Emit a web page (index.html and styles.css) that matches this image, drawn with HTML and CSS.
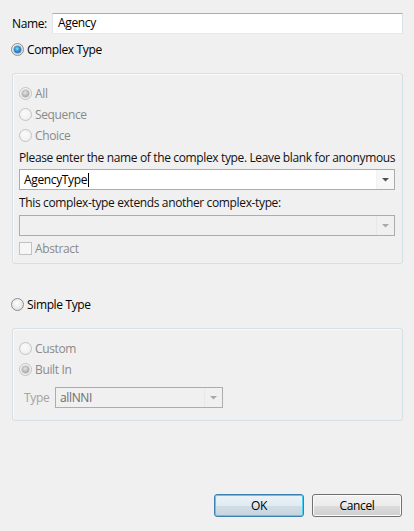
FILE: index.html
```html
<!DOCTYPE html>
<html>
<head>
<meta charset="utf-8">
<link rel="stylesheet" href="styles.css">
</head>
<body>
<div class="dialog">
  <div class="name-row">
    <span class="name-label">Name:</span>
    <div class="field name-field">Agency</div>
  </div>

  <div class="opt top-opt"><span class="radio checked"></span><span>Complex Type</span></div>

  <div class="group g1">
    <div class="opt dis"><span class="radio dis checked"></span><span>All</span></div>
    <div class="opt dis"><span class="radio dis"></span><span>Sequence</span></div>
    <div class="opt dis"><span class="radio dis"></span><span>Choice</span></div>
    <div class="caption cap1">Please enter the name of the complex type. Leave blank for anonymous</div>
    <div class="combo">
      <span class="val">AgencyType<span class="caret"></span></span>
      <span class="drop"><svg width="7" height="4" viewBox="0 0 7 4"><polygon points="0,0 7,0 3.5,3.5" fill="#505050"/></svg></span>
    </div>
    <div class="caption cap2">This complex-type extends another complex-type:</div>
    <div class="combo disabled">
      <span class="val"></span>
      <span class="drop"><svg width="7" height="4" viewBox="0 0 7 4"><polygon points="0,0 7,0 3.5,3.5" fill="#a8a8a8"/></svg></span>
    </div>
    <div class="opt dis abstract"><span class="check"></span><span>Abstract</span></div>
  </div>

  <div class="opt simple-opt"><span class="radio"></span><span>Simple Type</span></div>

  <div class="group g2">
    <div class="opt dis"><span class="radio dis"></span><span>Custom</span></div>
    <div class="opt dis"><span class="radio dis checked"></span><span>Built In</span></div>
    <div class="type-row">
      <span class="type-label">Type</span>
      <div class="combo disabled type-combo">
        <span class="val">allNNI</span>
        <span class="drop"><svg width="7" height="4" viewBox="0 0 7 4"><polygon points="0,0 7,0 3.5,3.5" fill="#a8a8a8"/></svg></span>
      </div>
    </div>
  </div>

  <div class="buttons">
    <button class="btn default">OK</button>
    <button class="btn">Cancel</button>
  </div>
</div>
</body>
</html>
```

FILE: styles.css
```css
html, body {
  margin: 0;
  padding: 0;
  background: #f0f0f0;
}
body {
  width: 414px;
  height: 531px;
  overflow: hidden;
  font-family: "Open Sans", "Noto Sans", sans-serif;
  font-size: 12px;
  letter-spacing: -0.36px;
  color: #000;
}
.dialog {
  padding: 13px 11px 0 12px;
}
.name-row {
  display: flex;
  align-items: center;
  height: 21px;
}
.name-label {
  width: 40px;
  margin-top: -1px;
}
.field {
  box-sizing: border-box;
  height: 21px;
  background: #fff;
  border: 1px solid #e3e9ef;
  border-top-color: #abadb3;
  border-left-color: #e2e3ea;
  border-right-color: #dbdfe6;
  padding-left: 5px;
  line-height: 18px;
}
.name-field {
  width: 351px;
}
.opt {
  display: flex;
  align-items: center;
  height: 21px;
}
.opt.dis {
  color: #8a8a8a;
}
.top-opt {
  margin-top: 7px;
  height: 17px;
  margin-left: -1px;
}
.simple-opt {
  margin-top: 32px;
  height: 17px;
  margin-left: -1px;
}
.radio {
  position: relative;
  box-sizing: border-box;
  width: 13px;
  height: 13px;
  border-radius: 50%;
  border: 1px solid #8e8f8f;
  background: radial-gradient(circle at 45% 40%, #ffffff 0%, #e6e6e6 60%, #cfcfcf 100%);
  margin-right: 3px;
  flex: none;
}
.radio.dis {
  border-color: #c3c3c3;
  background: radial-gradient(circle at 45% 40%, #fbfbfb 0%, #f0f0f0 70%, #e4e4e4 100%);
}
.radio.checked::after {
  content: "";
  position: absolute;
  left: 2px;
  top: 2px;
  width: 7px;
  height: 7px;
  border-radius: 50%;
  background: radial-gradient(circle at 45% 40%, #8fe0ff 0%, #2a8ad4 45%, #0d4f8a 100%);
  box-shadow: 0 0 0 0.5px #5b7d99;
}
.radio.dis.checked::after {
  background: radial-gradient(circle at 45% 40%, #e6e6e6 0%, #b5b5b5 55%, #8f8f8f 100%);
  box-shadow: 0 0 0 0.5px #a8a8a8;
}
.check {
  box-sizing: border-box;
  width: 13px;
  height: 13px;
  border: 1px solid #c2c2c2;
  background: #f6f6f6;
  margin-right: 3px;
  flex: none;
}
.group {
  box-sizing: border-box;
  width: 391px;
  margin-top: 15px;
  border: 1px solid #d5dfe5;
  border-radius: 3px;
  box-shadow: inset 1px 1px 0 #fafafa;
  padding: 9px 8px 3px 6px;
}
.caption {
  display: flex;
  align-items: center;
  color: #111;
  white-space: nowrap;
}
.cap1 {
  height: 23px;
}
.cap2 {
  height: 25px;
}
.combo {
  box-sizing: border-box;
  display: flex;
  height: 21px;
  border: 1px solid #acacac;
  background: #fff;
  width: 376px;
}
.combo .val {
  flex: 1;
  display: flex;
  align-items: center;
  padding-left: 4px;
}
.caret {
  display: inline-block;
  width: 1px;
  height: 14px;
  background: #000;
  margin-left: 1px;
}
.combo .drop {
  width: 17px;
  display: flex;
  align-items: center;
  justify-content: center;
  border-left: 1px solid #f2f2f2;
  background: #f7f7f7;
}
.combo.disabled {
  background: #f0f0f0;
  border-color: #adadad;
}
.combo.disabled .drop {
  background: #f0f0f0;
  border-left-color: #e8e8e8;
}
.abstract {
  height: 24px;
}
.g2 {
  padding-bottom: 12px;
}
.type-row {
  display: flex;
  align-items: center;
  margin-top: 7px;
}
.type-label {
  width: 31px;
  margin-left: 5px;
  color: #a3a3a3;
}
.type-combo {
  width: 168px;
  color: #6d6d6d;
  background: #f2f2f2;
}
.buttons {
  display: flex;
  justify-content: flex-end;
  gap: 8px;
  margin-top: 73px;
  margin-right: 1px;
}
.btn {
  box-sizing: border-box;
  width: 90px;
  height: 23px;
  font-family: inherit;
  font-size: 12px;
  letter-spacing: inherit;
  color: #000;
  border: 1px solid #707070;
  border-radius: 3px;
  background: linear-gradient(to bottom, #f2f2f2 0%, #ebebeb 50%, #dddddd 51%, #cfcfcf 100%);
  box-shadow: inset 0 0 0 1px #fbfbfb;
  padding: 0;
}
.btn.default {
  border-color: #3c7fb1;
  background: linear-gradient(to bottom, #eaf3f8 0%, #e0ebf1 50%, #d1dee6 51%, #c6d4dd 100%);
  box-shadow: inset 0 0 0 1px #48d0f7;
}
```
